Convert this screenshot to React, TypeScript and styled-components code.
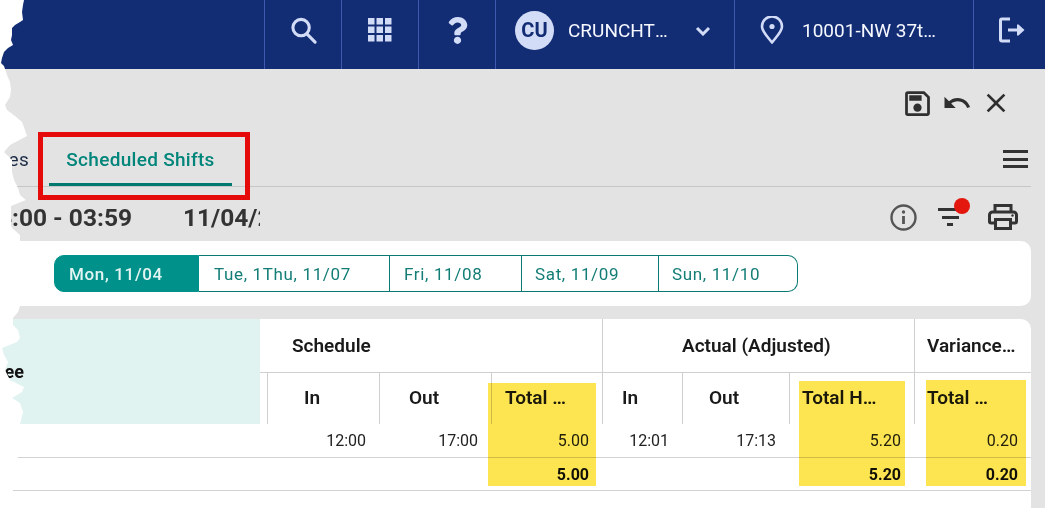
import styled, { createGlobalStyle } from 'styled-components'
import { FaQuestion } from 'react-icons/fa'
import { MdClose, MdOutlineSave, MdUndo } from 'react-icons/md'

const GlobalStyle = createGlobalStyle`
  html, body {
    margin: 0;
    padding: 0;
    background: #e3e3e3;
  }
  body {
    font-family: Roboto, "Liberation Sans", sans-serif;
    color: #222;
  }
`

const Page = styled.div`
  position: relative;
  width: 1045px;
  height: 508px;
  overflow: hidden;
  display: flex;
  flex-direction: column;
  background: #e3e3e3;
`

const TopBar = styled.header`
  flex: none;
  height: 69px;
  display: flex;
  justify-content: flex-end;
  background: #132d75;
  color: #f2f5ff;
`

const TopCell = styled.div<{ $w: number }>`
  flex: none;
  box-sizing: border-box;
  width: ${p => p.$w}px;
  padding-bottom: 9px;
  display: flex;
  align-items: center;
  justify-content: center;
  border-left: 1px solid #3d5aae;
  color: #d3dcf7;
`

const Avatar = styled.div`
  flex: none;
  width: 39px;
  height: 39px;
  border-radius: 50%;
  display: flex;
  align-items: center;
  justify-content: center;
  background: #d3dcf7;
  color: #132d75;
  font-size: 20px;
  font-weight: 700;
`

const TopLabel = styled.span<{ $w: number }>`
  width: ${p => p.$w}px;
  white-space: nowrap;
  overflow: hidden;
  text-overflow: ellipsis;
  font-size: 19px;
  font-weight: 400;
  color: #f6f8ff;
`

const UserBox = styled(TopCell)<{ $pad: number; $gap: number }>`
  justify-content: flex-start;
  padding-left: ${p => p.$pad}px;
  gap: ${p => p.$gap}px;
`

const ChevronWrap = styled.span`
  display: flex;
  margin: 2px 0 0 12px;
`

const LogoutCell = styled(TopCell)`
  padding-left: 6px;
`

const ActionRow = styled.div`
  flex: none;
  height: 63px;
  box-sizing: border-box;
  padding: 19px 33px 14px 0;
  display: flex;
  align-items: center;
  justify-content: flex-end;
  gap: 8px;
  color: #2f2f2f;
`

const TabRow = styled.div`
  flex: none;
  box-sizing: border-box;
  height: 55px;
  margin-right: 14px;
  display: flex;
  justify-content: space-between;
  border-bottom: 1px solid #c6c6c6;
`

const Tabs = styled.div`
  display: flex;
`

const Tab = styled.div<{ $active?: boolean }>`
  box-sizing: border-box;
  width: ${p => (p.$active ? 183 : 49)}px;
  padding: 3px ${p => (p.$active ? 0 : 20)}px 0 0;
  display: flex;
  align-items: center;
  justify-content: ${p => (p.$active ? 'center' : 'flex-end')};
  white-space: nowrap;
  font-size: 19px;
  letter-spacing: 0.3px;
  font-weight: ${p => (p.$active ? 500 : 400)};
  color: ${p => (p.$active ? '#00857a' : '#1c2b44')};
  border-bottom: 3px solid ${p => (p.$active ? '#007a6e' : 'transparent')};
`

const Burger = styled.div`
  width: 25px;
  padding-top: 18px;
  margin-right: 3px;
  display: flex;
  flex-direction: column;
  gap: 4.5px;

  span {
    height: 3px;
    background: #333;
  }
`

const InfoRow = styled.div`
  flex: none;
  height: 54px;
  margin-right: 14px;
  display: flex;
  align-items: center;
  padding-top: 6px;
  box-sizing: border-box;
`

const TimeRange = styled.div`
  width: 132px;
  display: flex;
  justify-content: flex-end;
  white-space: nowrap;
  font-size: 24.5px;
  font-weight: 700;
  color: #333;
`

const DateText = styled(TimeRange)`
  width: 77px;
  margin-left: 51px;
  justify-content: flex-start;
  overflow: hidden;
`

const InfoIcons = styled.div`
  margin-left: auto;
  margin-right: 13.5px;
  display: flex;
  align-items: center;
  gap: 21px;
  color: #333;
`

const FilterBox = styled.div`
  position: relative;
  width: 28px;
  height: 28px;
  display: flex;
  flex-direction: column;
  align-items: center;
  justify-content: center;
  gap: 4.5px;
  margin-left: -2px;
  margin-right: 2.5px;
`

const FilterLine = styled.span<{ $w: number }>`
  width: ${p => p.$w}px;
  height: 3px;
  background: #333;
`

const Dot = styled.span`
  position: absolute;
  top: -5px;
  right: -6px;
  width: 16px;
  height: 16px;
  border-radius: 50%;
  background: #e3170d;
`

const DateCard = styled.div`
  flex: none;
  box-sizing: border-box;
  height: 65px;
  margin-right: 14px;
  padding: 14px 0 0 54px;
  background: #fff;
  border-radius: 0 10px 10px 0;
`

const Segments = styled.div`
  display: flex;
  height: 37px;
`

const Segment = styled.div<{ $w: number; $pad: number; $active?: boolean; $last?: boolean }>`
  box-sizing: border-box;
  width: ${p => p.$w}px;
  display: flex;
  align-items: center;
  padding-left: ${p => p.$pad}px;
  font-size: 17px;
  letter-spacing: 0.65px;
  white-space: nowrap;
  font-weight: ${p => (p.$active ? 500 : 400)};
  color: ${p => (p.$active ? '#e2f5f3' : '#137d76')};
  background: ${p => (p.$active ? '#00928a' : '#fff')};
  border: 1px solid ${p => (p.$active ? '#00928a' : '#0b7a72')};
  border-left-width: ${p => (p.$active ? 1 : 0)}px;
  border-radius: ${p => (p.$active ? '10px 0 0 10px' : p.$last ? '0 10px 10px 0' : '0')};
`

const TableCard = styled.div`
  position: relative;
  flex: 1;
  margin: 13px 14px 0 0;
  background: #fff;
  border-radius: 0 10px 0 0;
`

const Grid = styled.div`
  display: grid;
  grid-template-columns: 260px 7px 112px 112px 111px 80px 107px 125px 117px;
  grid-template-rows: 54px 51px 34px 33px;
`

const LeadHead = styled.div`
  grid-column: 1;
  grid-row: 1 / span 2;
  display: flex;
  align-items: center;
  justify-content: flex-end;
  padding: 0 236px 0 0;
  background: #e0f3f1;
  font-size: 18px;
  font-weight: 700;
  color: #111;
  white-space: nowrap;
`

const GroupHead = styled.div<{ $span: number; $pl: number; $pr?: number; $first?: boolean }>`
  grid-column: span ${p => p.$span};
  box-sizing: border-box;
  min-width: 0;
  display: flex;
  align-items: center;
  padding: 0 ${p => p.$pr ?? 10}px 0 ${p => p.$pl}px;
  font-size: 19px;
  font-weight: 600;
  color: #1a1a1a;
  border-bottom: 1px solid #cfcfcf;
  border-left: ${p => (p.$first ? 'none' : '1px solid #cfcfcf')};
  overflow: hidden;

  span {
    white-space: nowrap;
    overflow: hidden;
    text-overflow: ellipsis;
  }
`

const Spacer = styled.div`
  grid-column: 2;
`

const SubHead = styled.div<{ $pl: number; $pr?: number }>`
  box-sizing: border-box;
  min-width: 0;
  height: 51px;
  padding: 13px ${p => p.$pr ?? 8}px 0 ${p => p.$pl}px;
  font-size: 19px;
  font-weight: 600;
  color: #1a1a1a;
  border-left: 1px solid #cfcfcf;
  white-space: nowrap;
  overflow: hidden;
  text-overflow: ellipsis;
`

const Row = styled.div`
  grid-column: 1 / -1;
  display: grid;
  grid-template-columns: subgrid;
  align-items: center;
  border-bottom: 1px solid #d2d2d2;
`

const LeadCell = styled.div`
  grid-column: 1 / span 2;
`

const Cell = styled.div<{ $bold?: boolean }>`
  padding-right: 13px;
  text-align: right;
  font-size: 16px;
  font-weight: ${p => (p.$bold ? 700 : 400)};
  color: ${p => (p.$bold ? '#111' : '#222')};
`

const Mark = styled.div<{ $l: number; $t: number; $w: number; $h: number }>`
  position: absolute;
  left: ${p => p.$l}px;
  top: ${p => p.$t}px;
  width: ${p => p.$w}px;
  height: ${p => p.$h}px;
  background: #fde552;
  mix-blend-mode: multiply;
`

const RedBox = styled.div`
  position: absolute;
  left: 38px;
  top: 132px;
  width: 212px;
  height: 68px;
  box-sizing: border-box;
  border: 5px solid #e60b0b;
`

const Torn = styled.svg`
  position: absolute;
  left: 0;
  top: 0;
  width: 30px;
  height: 508px;
`

const tornEdge =
  '0,0 24,0 23,5 22,12 23,20 20,22 15,25 12,28 12,35 11,40 13,45 8,48 4,52 2,58 1,63 4,66 5,69 7,75 10,82 11,90 10,97 5,105 7,110 15,116 22,122 25,130 27,136 10,145 4,152 12,160 12,172 14,180 18,188 20,195 26,200 11,206 11,225 12,228 20,235 20,306 18,312 13,318 13,325 18,330 20,338 17,342 2,348 4,355 8,362 5,370 10,380 24,387 22,392 12,398 20,403 23,412 20,424 18,440 18,457 14,475 13,490 12,508 0,508'

const SearchIcon = () => (
  <svg width="27" height="27" viewBox="0 0 28 28" fill="none" stroke="currentColor" strokeWidth="3.2">
    <circle cx="11.5" cy="11" r="8.5" />
    <path d="M17.5 17.5 26 26" strokeLinecap="round" />
  </svg>
)

const GridIcon = () => (
  <svg width="24" height="24" viewBox="0 0 24 24" fill="currentColor">
    {[0, 8.5, 17].map(y =>
      [0, 8.5, 17].map(x => <rect key={`${x}-${y}`} x={x} y={y} width="6.5" height="6.5" />)
    )}
  </svg>
)

const Chevron = () => (
  <svg width="16" height="10" viewBox="0 0 16 10" fill="none" stroke="currentColor" strokeWidth="3">
    <path d="M2 2l6 6 6-6" />
  </svg>
)

const PinIcon = () => (
  <svg width="24" height="28" viewBox="0 0 24 28" fill="none" stroke="currentColor" strokeWidth="2.6">
    <path d="M12 26.5C7 20 2 15.5 2 10.5a10 10 0 0 1 20 0C22 15.5 17 20 12 26.5z" strokeLinejoin="round" />
    <circle cx="12" cy="10.5" r="2.6" fill="currentColor" stroke="none" />
  </svg>
)

const LogoutIcon = () => (
  <svg width="27" height="26" viewBox="0 0 27 26" fill="none" stroke="currentColor" strokeWidth="3">
    <path d="M11 2H3a1.5 1.5 0 0 0-1.5 1.5v19A1.5 1.5 0 0 0 3 24h8" />
    <path d="M9 13h13" />
    <path d="M18 7.5h1.5l6 5.5-6 5.5H18z" fill="currentColor" stroke="none" />
  </svg>
)

const InfoIcon = () => (
  <svg width="27" height="27" viewBox="0 0 27 27" fill="none" stroke="#555" strokeWidth="2.4">
    <circle cx="13.5" cy="13.5" r="12" />
    <path d="M13.5 12v8" strokeWidth="2.8" />
    <circle cx="13.5" cy="8" r="1.7" fill="#555" stroke="none" />
  </svg>
)

const PrintIcon = () => (
  <svg width="30" height="26" viewBox="0 0 30 26" fill="none" stroke="currentColor" strokeWidth="3">
    <path d="M7 8V1.500h16V8" />
    <path d="M7 19H3a1.500 1.500 0 0 1-1.500-1.500V11A3 3 0 0 1 4.500 8h21a3 3 0 0 1 3 3v6.500A1.500 1.500 0 0 1 27 19h-4" />
    <rect x="7.500" y="15.500" width="15" height="9" />
    <circle cx="24.500" cy="11.500" r="1.200" fill="currentColor" stroke="none" />
  </svg>
)

const days = [
  { label: 'Mon, 11/04', w: 145, pad: 14 },
  { label: 'Tue, 1Thu, 11/07', w: 191, pad: 15 },
  { label: 'Fri, 11/08', w: 132, pad: 14 },
  { label: 'Sat, 11/09', w: 137, pad: 13 },
  { label: 'Sun, 11/10', w: 139, pad: 13 },
]

const App = () => {
  return (
    <Page>
      <GlobalStyle />
      <TopBar>
        <TopCell $w={77}><SearchIcon /></TopCell>
        <TopCell $w={77}><GridIcon /></TopCell>
        <TopCell $w={77}><FaQuestion size={27} /></TopCell>
        <UserBox $w={239} $pad={19} $gap={14}>
          <Avatar>CU</Avatar>
          <TopLabel $w={101}>CRUNCHTIME</TopLabel>
          <ChevronWrap><Chevron /></ChevronWrap>
        </UserBox>
        <UserBox $w={239} $pad={25} $gap={18}>
          <PinIcon />
          <TopLabel $w={136}>10001-NW 37th Ave</TopLabel>
        </UserBox>
        <LogoutCell $w={72}><LogoutIcon /></LogoutCell>
      </TopBar>

      <ActionRow>
        <MdOutlineSave size={33} />
        <MdUndo size={30} />
        <MdClose size={32} />
      </ActionRow>

      <TabRow>
        <Tabs>
          <Tab>Employees</Tab>
          <Tab $active>Scheduled Shifts</Tab>
        </Tabs>
        <Burger><span /><span /><span /></Burger>
      </TabRow>

      <InfoRow>
        <TimeRange>04:00 - 03:59</TimeRange>
        <DateText>11/04/2024</DateText>
        <InfoIcons>
          <InfoIcon />
          <FilterBox>
            <FilterLine $w={24} />
            <FilterLine $w={17} />
            <FilterLine $w={6} />
            <Dot />
          </FilterBox>
          <PrintIcon />
        </InfoIcons>
      </InfoRow>

      <DateCard>
        <Segments>
          {days.map((d, i) => (
            <Segment key={d.label} $w={d.w} $pad={d.pad} $active={i === 0} $last={i === days.length - 1}>
              {d.label}
            </Segment>
          ))}
        </Segments>
      </DateCard>

      <TableCard>
        <Grid>
          <LeadHead>Employee</LeadHead>
          <GroupHead $span={4} $pl={32} $first><span>Schedule</span></GroupHead>
          <GroupHead $span={3} $pl={79}><span>Actual (Adjusted)</span></GroupHead>
          <GroupHead $span={1} $pl={12} $pr={13}><span>Variance Hours</span></GroupHead>
          <Spacer />
          <SubHead $pl={36}>In</SubHead>
          <SubHead $pl={29}>Out</SubHead>
          <SubHead $pl={13} $pr={32}>Total Hours</SubHead>
          <SubHead $pl={19}>In</SubHead>
          <SubHead $pl={26}>Out</SubHead>
          <SubHead $pl={12} $pr={36}>Total Hours</SubHead>
          <SubHead $pl={12} $pr={40}>Total Hours</SubHead>
          <Row>
            <LeadCell />
            <Cell>12:00</Cell>
            <Cell>17:00</Cell>
            <Cell>5.00</Cell>
            <Cell>12:01</Cell>
            <Cell>17:13</Cell>
            <Cell>5.20</Cell>
            <Cell>0.20</Cell>
          </Row>
          <Row>
            <LeadCell />
            <Cell />
            <Cell />
            <Cell $bold>5.00</Cell>
            <Cell />
            <Cell />
            <Cell $bold>5.20</Cell>
            <Cell $bold>0.20</Cell>
          </Row>
        </Grid>
        <Mark $l={488} $t={64} $w={108} $h={103} />
        <Mark $l={799} $t={62} $w={106} $h={105} />
        <Mark $l={926} $t={61} $w={100} $h={106} />
      </TableCard>

      <RedBox />
      <Torn viewBox="0 0 30 508">
        <polygon points={tornEdge} fill="#fff" />
      </Torn>
    </Page>
  )
}

export default App
